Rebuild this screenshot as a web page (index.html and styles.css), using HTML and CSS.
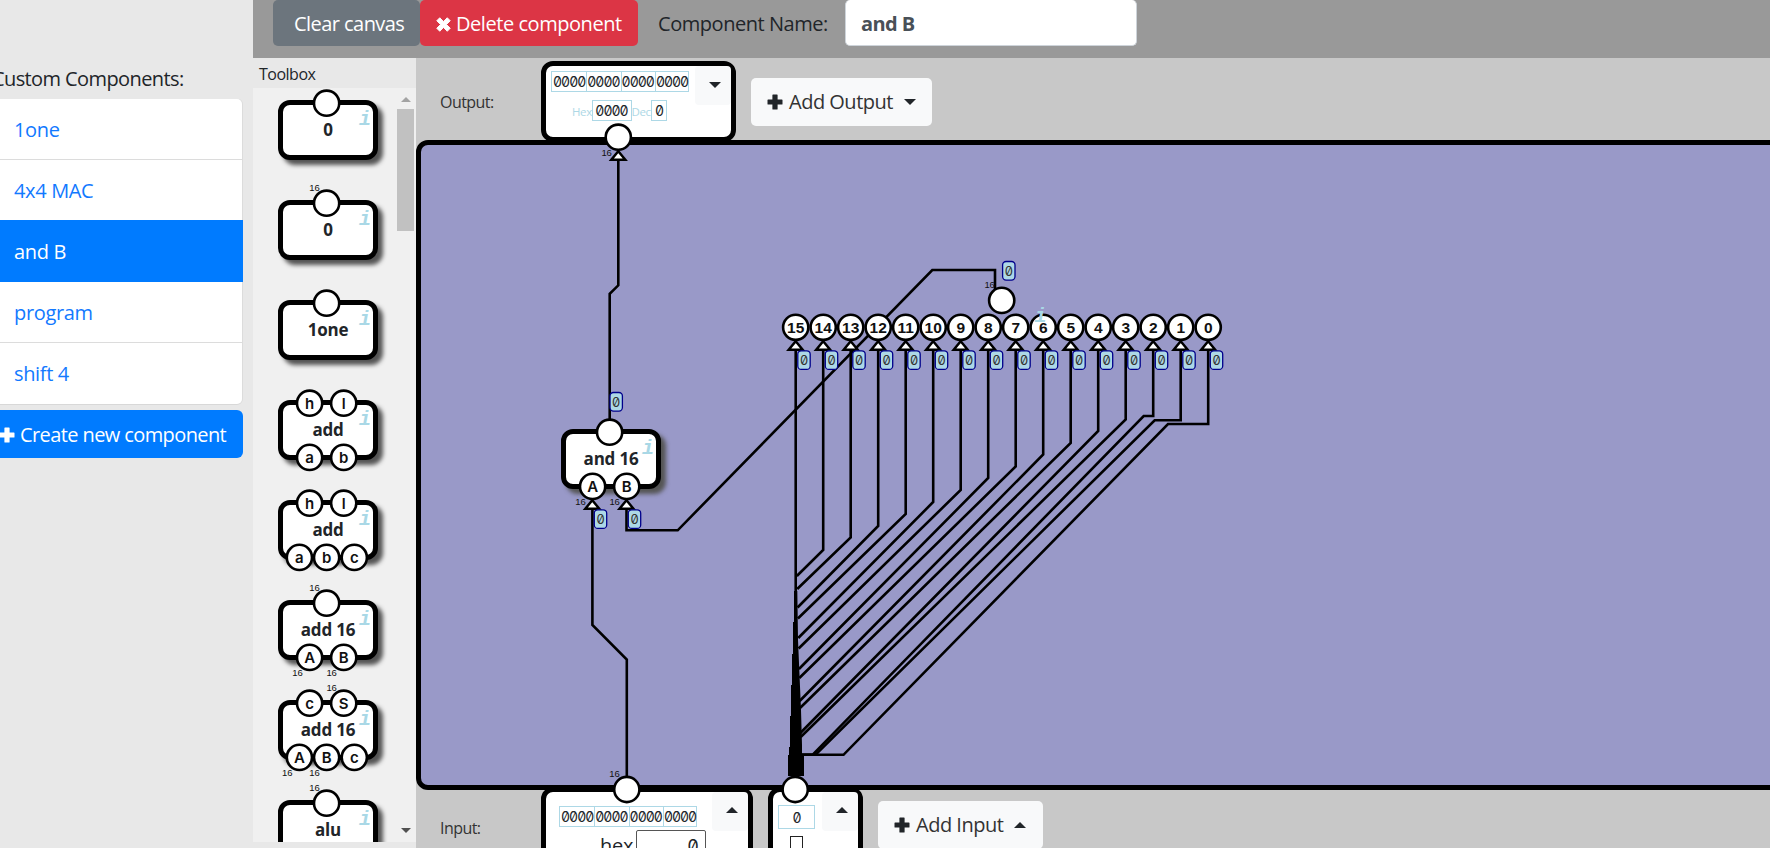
FILE: index.html
```html
<!DOCTYPE html>
<html lang="en">
<head>
<meta charset="utf-8">
<title>Circuit designer</title>
<link rel="stylesheet" href="styles.css">
</head>
<body>
<svg class="defs" width="0" height="0">
  <defs>
    <symbol id="plus" viewBox="0 0 16 16"><path d="M6 .5h4a.6.6 0 0 1 .6.6v4.3h4.300a.6.6 0 0 1 .6.6v4a.6.6 0 0 1-.6.6h-4.300v4.300a.6.6 0 0 1-.6.6H6a.6.6 0 0 1-.6-.6v-4.300H1.100a.6.6 0 0 1-.6-.6V6a.6.6 0 0 1 .6-.6h4.300V1.100A.6.6 0 0 1 6 .5z" fill="currentColor"/></symbol>
    <symbol id="cross" viewBox="0 0 16 16"><path d="M4 .8 8 4.800l4-4L15.200 4l-4 4 4 4-3.200 3.200-4-4-4 4L.8 12l4-4-4-4z" fill="currentColor" stroke="currentColor" stroke-width="1" stroke-linejoin="round"/></symbol>
  </defs>
</svg>
<div class="app">
  <aside class="sidebar">
    <div class="sidebar-title">Custom Components:</div>
    <nav class="list">
      <a class="item">1one</a>
      <a class="item">4x4 MAC</a>
      <a class="item active">and B</a>
      <a class="item">program</a>
      <a class="item last">shift 4</a>
    </nav>
    <button class="btn create"><svg class="ico"><use href="#plus"/></svg><span>Create new component</span></button>
  </aside>
  <main class="main">
    <header class="topbar">
      <button class="btn clear"><span>Clear canvas</span></button>
      <button class="btn delete"><svg class="ico"><use href="#cross"/></svg><span>Delete component</span></button>
      <label class="name-label">Component Name:</label>
      <div class="name-input">and B</div>
    </header>
    <div class="body">
      <section class="toolbox">
        <div class="toolbox-title">Toolbox</div>
        <div class="toolbox-view">
          <div class="parts" id="parts"></div>
          <div class="scroll"><i class="up"></i><i class="thumb"></i><i class="down"></i></div>
        </div>
      </section>
      <section class="work">
        <div class="row output">
          <span class="row-label">Output:</span>
          <div class="io io-out">
            <div class="io-main">
              <div class="bits"><b>0000</b><b>0000</b><b>0000</b><b>0000</b></div>
              <div class="radix"><span>Hex</span><b class="hexv">0000</b><span>Dec</span><b class="decv">0</b></div>
            </div>
            <div class="drop"><i class="caret-down"></i></div>
          </div>
          <button class="add add-out"><svg class="ico"><use href="#plus"/></svg><span>Add Output</span><i class="caret-down"></i></button>
        </div>
        <div class="canvas"></div>
        <div class="row input">
          <span class="row-label">Input:</span>
          <div class="io io-in">
            <div class="io-main">
              <div class="bits"><b>0000</b><b>0000</b><b>0000</b><b>0000</b></div>
              <div class="hexrow"><span>hex</span><b>0</b></div>
            </div>
            <div class="drop"><i class="caret-up"></i></div>
          </div>
          <div class="io io-bit">
            <div class="io-main">
              <div class="bit">0</div>
              <i class="toggle"></i>
            </div>
            <div class="drop"><i class="caret-up"></i></div>
          </div>
          <button class="add add-in"><svg class="ico"><use href="#plus"/></svg><span>Add Input</span><i class="caret-up"></i></button>
        </div>
        <svg class="wires" id="wires" viewBox="416 58 1354 790" width="1354" height="790"></svg>
        <div class="placed" id="placed"></div>
      </section>
    </div>
  </main>
</div>
<script src="script.js"></script>
</body>
</html>
```
FILE: styles.css
```css
* { box-sizing: border-box; }
body { margin: 0; width: 1770px; height: 848px; overflow: hidden; background: #e8e8e8; color: #212529; font: 20px/30px "Open Sans", "Noto Sans", sans-serif; }
button { border: 0; margin: 0; padding: 0; font: inherit; color: inherit; text-align: left; }
b, i { font-weight: normal; font-style: normal; }
.defs { position: absolute; }
.app { display: flex; width: 1770px; height: 848px; }
.ico { width: 16px; height: 16px; flex: none; }

.sidebar { width: 253px; flex: none; padding-top: 64px; overflow: hidden; }
.sidebar-title { height: 35px; margin-left: -8px; letter-spacing: -.6px; white-space: nowrap; }
.list { display: flex; flex-direction: column; width: 242px; height: 305px; background: #fff; border-radius: 0 5px 5px 0; box-shadow: 1px 0 #dcdcdc, 0 1px #d8d8d8; }
.item { height: 61px; padding: 16px 0 0 14px; color: #1279ff; border-bottom: 1px solid #dcdcdc; letter-spacing: -.35px; }
.item.active { width: 243px; height: 63px; margin-top: -1px; background: #007bff; color: #fff; border: 0; padding-top: 17px; }
.item.last { border: 0; }
.btn { display: flex; align-items: center; white-space: nowrap; color: #fff; letter-spacing: -.45px; }
.create { width: 243px; height: 48px; margin-top: 6px; padding-top: 1px; background: #007bff; border-radius: 0 6px 6px 0; gap: 5px; letter-spacing: -.6px; }
.create .ico { margin-left: -1px; }

.main { flex: 1; min-width: 0; display: flex; flex-direction: column; }
.topbar { height: 58px; background: #999; display: flex; align-items: flex-start; padding-left: 20px; }
.clear { width: 147px; height: 46px; padding: 2px 0 0 21px; background: #6c757d; border-radius: 5px; letter-spacing: -.55px; }
.delete { width: 218px; height: 46px; padding: 2px 0 0 16px; background: #dc3545; border-radius: 5px; gap: 5px; }
.delete .ico { width: 15px; height: 15px; }
.name-label { width: 207px; flex: none; padding: 9px 0 0 20px; letter-spacing: -.45px; white-space: nowrap; }
.name-input { width: 292px; height: 46px; padding: 9px 0 0 15px; background: #fff; border: 1px solid #ced4da; border-top: 0; border-radius: 5px; font-weight: bold; color: #495057; letter-spacing: -.6px; }

.body { flex: 1; min-height: 0; display: flex; }
.toolbox { width: 163px; flex: none; }
.toolbox-title { height: 30px; padding-left: 6px; font-size: 16px; line-height: 33px; letter-spacing: -.5px; }
.toolbox-view { display: flex; height: 754px; background: #f0f0f0; overflow: hidden; }
.parts { width: 144px; padding: 12px 0 0 25px; display: flex; flex-direction: column; gap: 40px; }
.scroll { width: 17px; display: flex; flex-direction: column; align-items: center; padding: 9px 0 9px; }
.up { border: 5px solid transparent; border-top: 0; border-bottom-color: #a3a3a3; }
.thumb { width: 17px; height: 122px; margin-top: 7px; background: #c1c1c1; }
.down { margin-top: auto; border: 5px solid transparent; border-bottom: 0; border-top-color: #505050; }

.part { position: relative; width: 100px; height: 60px; flex: none; border: 5px solid #000; border-radius: 12px; background: #fff; box-shadow: 5px 5px 4px #555; text-align: center; font-weight: bold; font-size: 17px; line-height: 50px; letter-spacing: -.2px; }
.part svg { position: absolute; left: -5px; top: -5px; overflow: visible; }
.port { fill: #fff; stroke: #000; stroke-width: 2.600px; }
.pl { font: 600 15px Inter, sans-serif; text-anchor: middle; letter-spacing: 0; fill: #111; }
.w { font: 9.500px "Liberation Sans", Arial, sans-serif; letter-spacing: -.2px; fill: #111; }
.info { font: italic bold 20px "Liberation Mono", monospace; letter-spacing: 0; fill: #a9d8e6; }

.work { position: relative; flex: 1; min-width: 0; background: #c8c8c8; overflow: hidden; }
.row { display: flex; align-items: flex-start; }
.row.output { height: 82px; }
.row.input { height: 58px; }
.row-label { width: 125px; padding-left: 24px; font-size: 16px; letter-spacing: -.55px; color: #333; }
.output .row-label { padding-top: 29px; }
.input .row-label { padding-top: 23px; }
.canvas { height: 650px; width: 1400px; background: #9999c8; border: 5px solid #000; border-radius: 12px; position: relative; z-index: 1; }
.io { display: flex; justify-content: space-between; flex: none; background: #fff; border: 5px solid #000; border-radius: 12px; }
.io-out { width: 195px; height: 81px; margin-top: 3px; }
.io-in { width: 212px; height: 90px; margin-top: -3px; }
.io-bit { width: 95px; height: 90px; margin: -3px 0 0 15px; }
.drop { width: 36px; height: 39px; background: #f8f9fa; border-radius: 4px; display: flex; justify-content: center; align-items: center; padding-left: 3px; }
.io-in .drop, .io-bit .drop { padding-bottom: 3px; }
.io-out .drop { padding-bottom: 2px; }
.caret-down { border: 6px solid transparent; border-bottom: 0; border-top-color: #212529; }
.caret-up { border: 6px solid transparent; border-top: 0; border-bottom-color: #212529; }
.bits, .hexv, .decv, .bit, .hexrow b { font: 14px/19px Inter, "DejaVu Sans Mono", monospace; font-feature-settings: "zero", "tnum"; letter-spacing: -1px; }
.bits { display: flex; width: 138px; height: 21px; border: 1px solid #add8e6; }
.bits b { width: 34.300px; flex: none; text-align: center; box-shadow: 1px 0 #add8e6; }
.bits b:last-child { box-shadow: none; }
.io-out .bits { margin: 5px 0 0 5px; }
.radix { display: flex; align-items: flex-start; margin: 8px 0 0 26px; }
.radix span { width: 19.500px; font-size: 11.500px; line-height: 23px; letter-spacing: -.4px; color: #add8e6; }
.radix b { height: 21px; border: 1px solid #add8e6; text-align: center; }
.hexv { width: 40px; }
.decv { width: 16px; }
.io-in .bits { margin: 14px 0 0 13px; }
.hexrow { display: flex; margin: 3px 0 0 54px; font-size: 20px; letter-spacing: -.3px; }
.hexrow span { width: 36px; line-height: 32px; }
.hexrow b { width: 70px; height: 40px; padding: 6px 7px 0 0; border: 1px solid #555; border-radius: 2px; text-align: right; font-size: 18px; }
.bit { width: 37px; height: 24px; margin: 13px 0 0 5px; border: 1px solid #add8e6; text-align: center; line-height: 23px; }
.toggle { display: block; width: 13px; height: 30px; margin: 7px 0 0 17px; border: 1px solid #222; }
.add { display: flex; align-items: center; height: 48px; background: #f8f9fa; border-radius: 5px; padding-left: 16px; white-space: nowrap; letter-spacing: -.5px; color: #333; }
.add .ico { color: #212529; margin-right: 6px; }
.add-out { width: 181px; margin: 20px 0 0 15px; }
.add-out span { width: 115px; }
.add-in { width: 165px; margin: 11px 0 0 15px; }
.add-in span { width: 98px; }
.wires { position: absolute; left: 0; top: 0; z-index: 3; }
.wire { fill: none; stroke: #000; stroke-width: 2.600px; }
.tri { fill: #fff; stroke: #000; stroke-width: 2.500px; }
.badge { fill: #add8e6; stroke: #00008b; stroke-width: 1.300px; }
.bt { font: 13px Inter, sans-serif; font-feature-settings: "zero"; text-anchor: middle; fill: #333; }
.pn { font: bold 15.500px "Liberation Sans", Arial, sans-serif; text-anchor: middle; fill: #111; }
.placed { position: absolute; left: 145px; top: 371px; z-index: 2; }
```
FILE: script.js
```js
const port = (x, y, t = '', cls = 'pl') =>
  `<circle class="port" cx="${x}" cy="${y}" r="12.6"/>` + (t ? `<text class="${cls}" x="${x}" y="${y + 5.5}">${t}</text>` : '');
const width16 = (x, y) => `<text class="w" x="${x}" y="${y}">16</text>`;

// Column offsets for one, two or three ports along an edge of a part.
const cols = { 1: [48.6], 2: [31.6, 65.7], 3: [21.4, 48.6, 76.3] };

function part(name, outs, ins) {
  let s = '';
  const edge = (list, y, wy) => list.forEach((p, i) => {
    const x = cols[list.length][i];
    const wide = p.endsWith('*');
    s += port(x, y, p.replace('*', ''));
    if (wide) s += width16(x - 17.3, wy);
  });
  edge(outs, 3.2, -9);
  edge(ins, 57.4, 76);
  s += '<text class="info" x="81" y="25">i</text>';
  return `<div class="part">${name}<svg width="100" height="60">${s}</svg></div>`;
}

document.getElementById('parts').innerHTML = [
  part('0', [''], []),
  part('0', ['*'], []),
  part('1one', [''], []),
  part('add', ['h', 'l'], ['a', 'b']),
  part('add', ['h', 'l'], ['a', 'b', 'c']),
  part('add 16', ['*'], ['A*', 'B*']),
  part('add 16', ['c', 'S*'], ['A*', 'B*', 'c']),
  part('alu', ['*'], [])
].join('');
document.getElementById('placed').innerHTML = part('and 16', [''], ['A*', 'B*']);

const wire = d => `<path class="wire" d="${d}"/>`;
const tri = (x, y) => `<path class="tri" d="M${x} ${y + 1.2}l7 8.600h-14z"/>`;
const badge = (x, y) => `<rect class="badge" x="${x}" y="${y}" width="12.4" height="18.6" rx="3.5"/><text class="bt" x="${x + 6.2}" y="${y + 14}">0</text>`;

let g = '';
g += wire('M618.300 160V285.300L609.700 293.800V420');
g += wire('M592.400 508V625L626.800 659.500V778');
g += wire('M626.500 508V530.300H677.700L932.300 270H995V290');

const bendY = [0, 550, 537.5, 526, 514, 502, 490, 478, 466.5, 454.5, 443, 431, 419.5];
const joinY = [0, 576, 589, 607.5, 618.5, 638, 648.5, 669, 678, 701, 708, 733, 737];
g += wire('M795.700 350V776');
for (let k = 1; k <= 12; k++) {
  const x = 795.7 + 27.5 * k;
  g += wire(`M${x} 350V${bendY[k]}L${796.5 + k * 0.35} ${joinY[k]}`);
}
g += wire('M1153.200 350V416H1143.700L812.500 754.800H797');
g += wire('M1180.700 350V420.200H1154.700L815.500 754.800H797');
g += wire('M1208.200 350V424H1168L843.500 754.800H797');
g += '<path d="M794.200 591H797.300L798 640L799.500 675L801 710L802 745V755H804V776H788V755H789V747H790V716H791V685H792V654H793V622H794V591z"/>';

for (let k = 0; k < 16; k++) {
  const x = 795.7 + 27.5 * k;
  g += tri(x, 340) + port(x, 327.3, String(15 - k), 'pn') + badge(+(x + 2.1).toFixed(1), 350.8);
}
g += '<text class="info" x="1034.500" y="322">i</text>';
g += width16(984.5, 288) + port(1001.7, 300.4) + badge(1002.6, 261.5);

g += tri(618.3, 150) + port(618.3, 137.2) + width16(601.5, 156);
g += tri(592.3, 499) + tri(626.5, 499) + badge(594.3, 509.8) + badge(628.3, 509.8) + badge(610, 392.5);
g += port(626.8, 789.5) + width16(609.3, 777) + port(795.2, 789.5);
document.getElementById('wires').innerHTML = g;
```
